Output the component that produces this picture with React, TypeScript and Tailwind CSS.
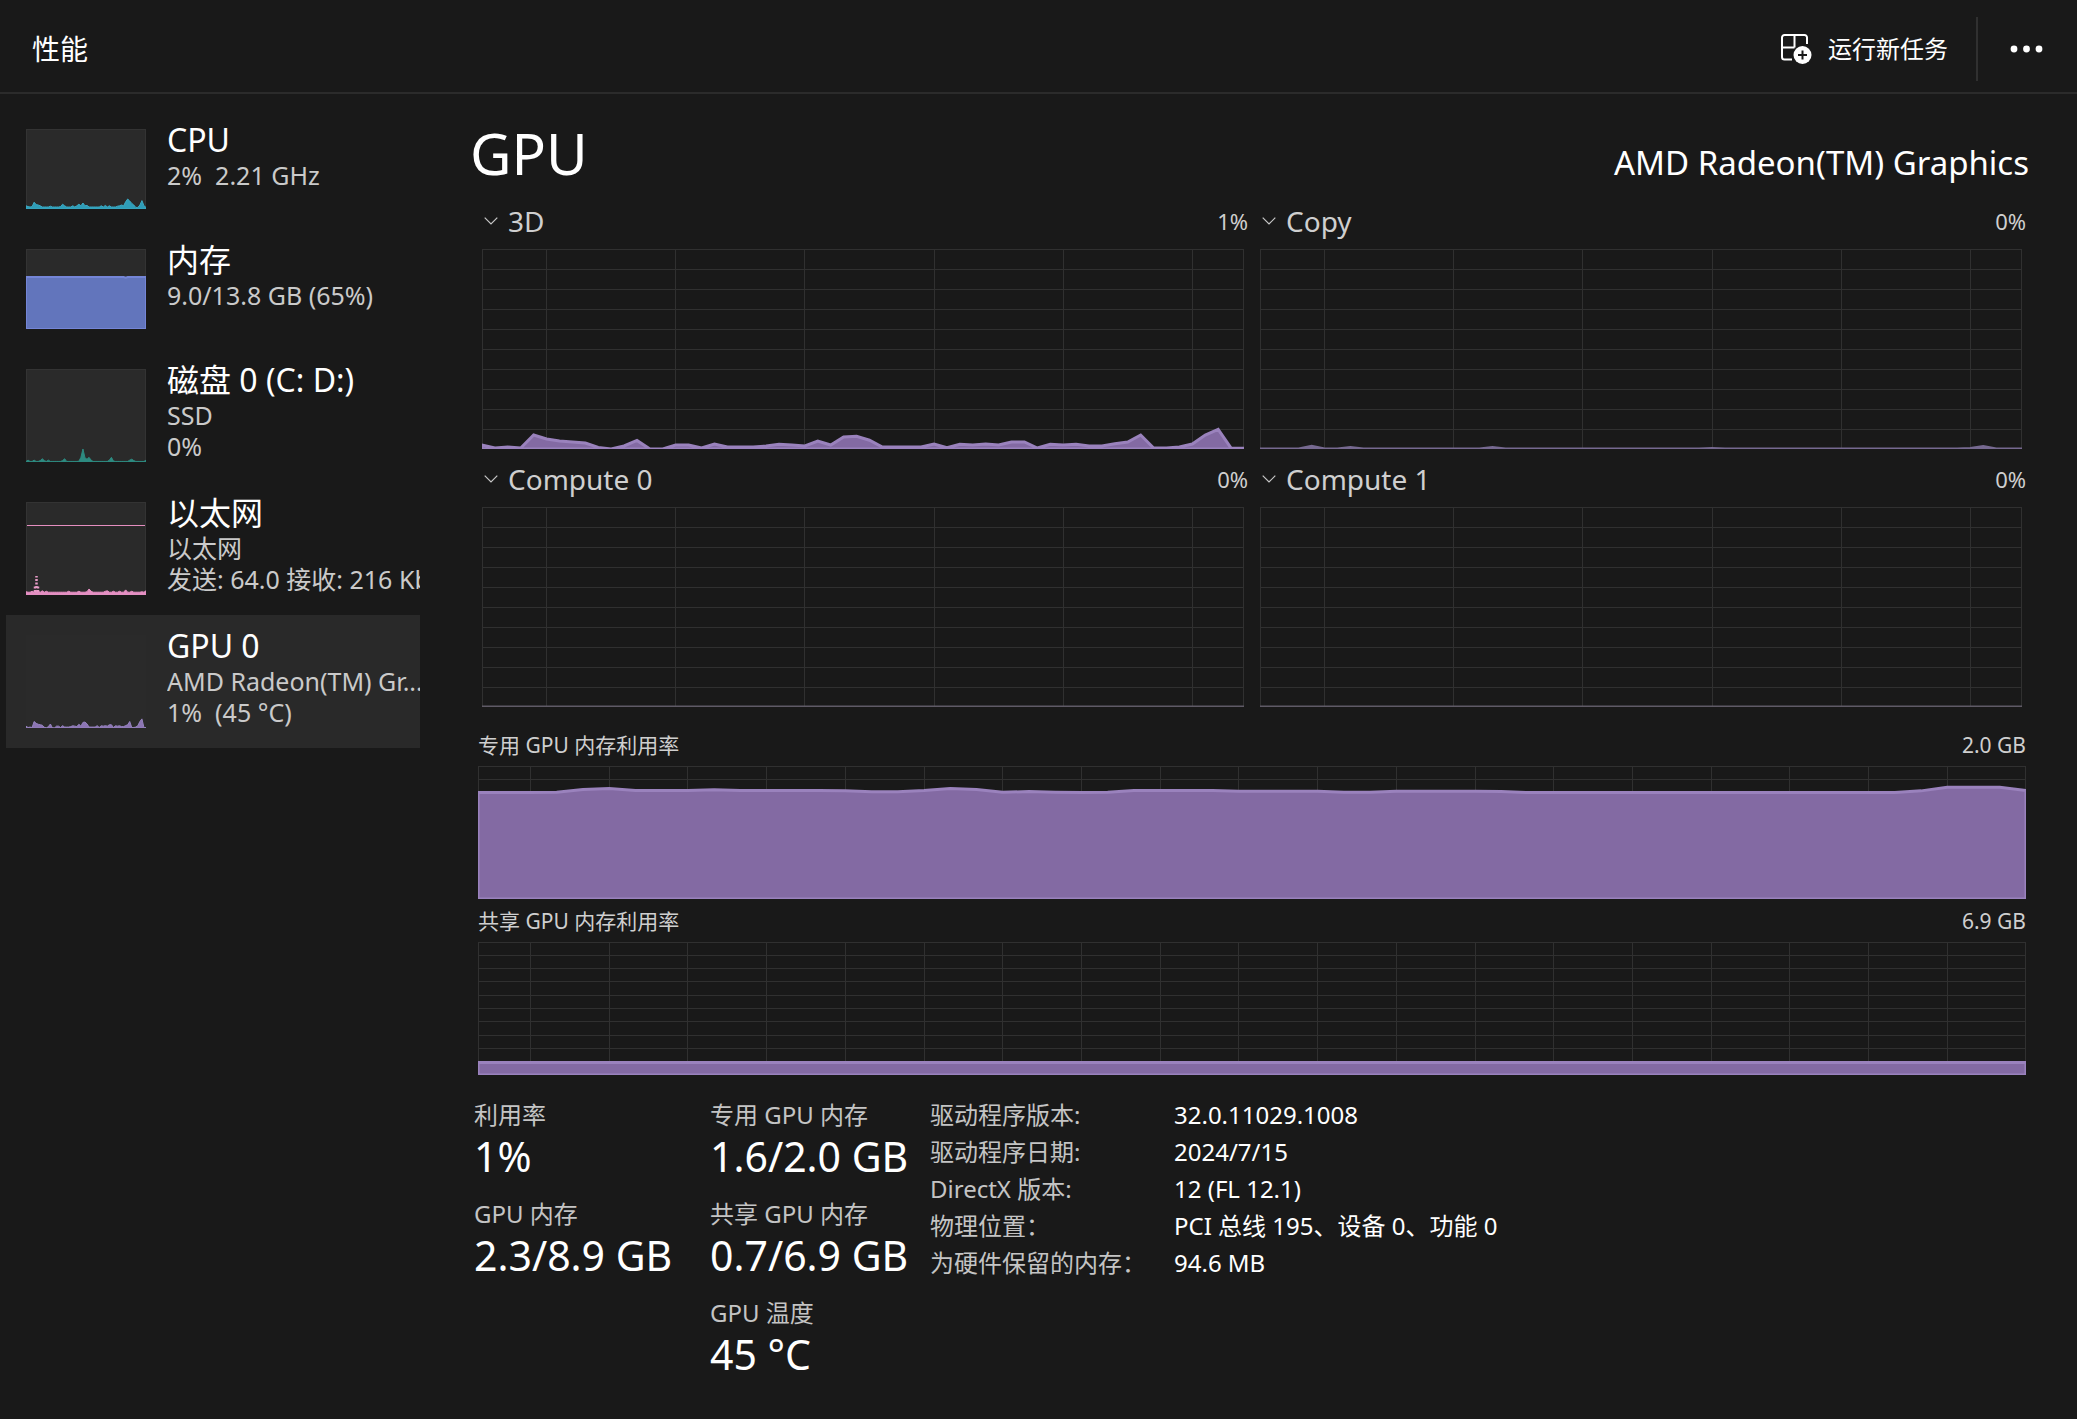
import React from "react";

type Series = number[];

/** Builds a 60-sample series from a resting level and a few peaks. */
function withPeaks(level: number, peaks: Record<number, number>): Series {
  return Array.from({ length: 60 }, (_, i) => peaks[i] ?? level);
}

const engine3d: Series = [
  2, 0.5, 1, 0.5, 7, 5, 4, 3.5, 3, 0.8, 0, 1.5, 4.3, 0, 0, 2, 2, 0.5, 2.5, 1, 1, 1, 1.5, 2.4, 2, 1.5, 4, 2, 6, 6.4,
  4.4, 1, 1, 1, 1, 2.5, 0.6, 2.4, 2, 2.5, 2, 3.5, 3.5, 0.5, 2.4, 2, 2.4, 1.5, 1.5, 2.6, 3.5, 7, 0.5, 0.5, 1, 2.5, 7,
  9.8, 0.4, 0.4,
];
const engineCopy = withPeaks(0, { 4: 1.3, 7: 0.8, 18: 0.8, 35: 0.3, 55: 0.3, 56: 1.3 });
const engineIdle = withPeaks(0, {});
const dedicatedMemory: Series = [
  80, 80, 80, 80.2, 82.3, 83, 81.6, 81.5, 81.5, 82.2, 81.5, 81.5, 81.5, 81.5, 81.3, 80.7, 80.7, 81.5, 83, 82.4, 80.2,
  80.8, 80.2, 80, 80.2, 81.5, 81.6, 81.6, 81.6, 81, 81, 81, 81, 80.3, 80.2, 81, 81, 81, 81, 80.8, ...Array(15).fill(80),
  81.3, 84, 84, 84, 81.5,
];
const sharedMemory = withPeaks(9.4, {});

const cpuLoad = withPeaks(2.5, {
  0: 4, 1: 3, 3: 3, 4: 8.5, 5: 5.5, 6: 5, 7: 4, 12: 3.5, 17: 3, 18: 6, 19: 4, 23: 4, 25: 4, 26: 6, 27: 4, 28: 7.5,
  29: 4, 30: 4.5, 37: 4, 39: 4.5, 41: 4, 45: 3.5, 46: 4, 47: 5, 48: 4, 49: 9, 50: 12.5, 51: 10, 52: 7, 53: 5, 54: 2,
  55: 2, 56: 5, 57: 10.5, 58: 4, 59: 2,
});
const memoryLoad = withPeaks(65, { 49: 64 });
const diskLoad = withPeaks(0.6, {
  1: 2, 4: 2, 7: 1.5, 8: 3.5, 9: 1.5, 11: 2, 18: 1.5, 19: 3.5, 26: 0.8, 27: 5, 28: 14, 29: 4.5, 30: 3, 31: 5, 32: 2,
  41: 2, 42: 5, 43: 1, 51: 2, 52: 3, 53: 1.5, 59: 2,
});
const ethernetLoad = withPeaks(3, {
  0: 3.5, 3: 4, 5: 5, 6: 4, 8: 4.5, 10: 4, 21: 4, 26: 4, 30: 3.5, 31: 6.5, 32: 4, 39: 4, 40: 4.5, 43: 4, 46: 4,
  49: 5.5, 52: 4, 57: 3.5, 59: 4.5,
});

interface AreaProps {
  data: Series;
  fill: string;
  stroke: string;
  strokeWidth?: number;
}

function Area({ data, fill, stroke, strokeWidth = 2 }: AreaProps) {
  const points = data.map((v, i) => `${i},${100 - v}`).join(" L");
  return (
    <svg className="absolute inset-0 h-full w-full" viewBox="0 0 59 100" preserveAspectRatio="none" aria-hidden="true">
      <path
        d={`M0,100 L${points} L59,100 Z`}
        fill={fill}
        stroke={stroke}
        strokeWidth={strokeWidth}
        vectorEffect="non-scaling-stroke"
      />
    </svg>
  );
}

interface GridChartProps {
  label: string;
  data: Series;
  firstLine: number;
  lineEvery: number;
  className: string;
  baseline?: string;
}

/** Chart with ten horizontal bands and vertical lines every few samples. */
function GridChart({ label, data, firstLine, lineEvery, className, baseline = "#9a82bd" }: GridChartProps) {
  const columns: number[] = [];
  for (let s = firstLine; s < 59; s += lineEvery) columns.push((s / 59) * 100);
  const rows = [10, 20, 30, 40, 50, 60, 70, 80, 90];
  return (
    <div
      role="img"
      aria-label={label}
      className={`relative overflow-hidden shadow-[inset_0_0_0_1px_#303030] ${className}`}
    >
      <svg className="absolute inset-0 h-full w-full" shapeRendering="crispEdges" aria-hidden="true">
        {rows.map((y) => (
          <line key={y} x1="0" x2="100%" y1={`${y}%`} y2={`${y}%`} stroke="#303030" />
        ))}
        {columns.map((x) => (
          <line key={x} x1={`${x}%`} x2={`${x}%`} y1="0" y2="100%" stroke="#303030" />
        ))}
      </svg>
      <Area data={data} fill="#836aa3" stroke={baseline} strokeWidth={3} />
    </div>
  );
}

function Chevron() {
  return (
    <svg width="14" height="8" viewBox="0 0 14 8" fill="none" stroke="#c8c8c8" strokeWidth="1.2" aria-hidden="true">
      <path d="M0.7 0.7 7 7 13.3 0.7" />
    </svg>
  );
}

const engines = ["3D", "Copy", "Compute 0", "Compute 1"];

interface EngineProps {
  name: string;
  load: string;
  data: Series;
  baseline?: string;
}

function EngineChart({ name, load, data, baseline }: EngineProps) {
  return (
    <section>
      <div className="-mr-1 flex h-[58px] items-center justify-between pt-0.5">
        <label className="flex items-center gap-2.5 pl-0.5">
          <Chevron />
          <select
            defaultValue={name}
            aria-label={`GPU 引擎: ${name}`}
            className="appearance-none bg-transparent text-[28px] leading-[40px] text-[#cfcfcf] outline-none"
          >
            {engines.map((e) => (
              <option key={e}>{e}</option>
            ))}
          </select>
        </label>
        <span className="text-[22px] text-[#cfcfcf]">{load}</span>
      </div>
      <GridChart
        label={name}
        data={data}
        firstLine={5}
        lineEvery={10}
        className="h-[200px]"
        baseline={baseline}
      />
    </section>
  );
}

function MemoryChart({ name, capacity, data }: { name: string; capacity: string; data: Series }) {
  return (
    <section>
      <div className="flex h-[43px] items-center justify-between pt-0.5 text-[21px] text-[#cfcfcf]">
        <h2>{name}</h2>
        <span>{capacity}</span>
      </div>
      <GridChart label={name} data={data} firstLine={2} lineEvery={3} className="h-[133px]" />
    </section>
  );
}

interface ResourceProps {
  title: string;
  lines: string[];
  selected?: boolean;
  children: React.ReactNode;
}

function Resource({ title, lines, selected, children }: ResourceProps) {
  const tall = lines.length > 1;
  return (
    <button
      type="button"
      aria-current={selected ? "page" : undefined}
      className={`flex w-full items-start gap-[21px] overflow-hidden pl-5 text-left ${
        tall ? "h-[133px]" : "h-[120px]"
      } ${selected ? "bg-[#292929]" : ""}`}
    >
      <span
        className={`relative mt-5 block w-[120px] shrink-0 overflow-hidden bg-[#2a2a2a] ${
          tall ? "h-[93px]" : "h-[80px]"
        } ${selected ? "" : "shadow-[inset_0_0_0_1px_#333333]"}`}
      >
        {children}
      </span>
      <span className="block min-w-0 flex-1 pt-[11px]">
        <span className="block whitespace-nowrap text-[32px] leading-[40px] text-white">{title}</span>
        {lines.map((line) => (
          <span
            key={line}
            className="block overflow-hidden whitespace-pre text-[25px] leading-[31px] text-[#cacaca]"
          >
            {line}
          </span>
        ))}
      </span>
    </button>
  );
}

function Stat({ label, value }: { label: string; value: string }) {
  return (
    <div>
      <dt className="text-[24px] leading-[32px] text-[#c4c4c4]">{label}</dt>
      <dd className="text-[41px] leading-[50px] text-white">{value}</dd>
    </div>
  );
}

const details: [string, string][] = [
  ["驱动程序版本:", "32.0.11029.1008"],
  ["驱动程序日期:", "2024/7/15"],
  ["DirectX 版本:", "12 (FL 12.1)"],
  ["物理位置：", "PCI 总线 195、设备 0、功能 0"],
  ["为硬件保留的内存：", "94.6 MB"],
];

export default function App() {
  return (
    <div
      lang="zh-CN"
      className="flex min-h-screen flex-col bg-[#191919] font-['Noto_Sans','Noto_Sans_CJK_SC',sans-serif] text-white"
    >
      <header className="flex h-[94px] items-center border-b-2 border-[#2b2b2b] pl-8 pt-1.5">
        <h1 className="flex-1 text-[28px] leading-[40px]">性能</h1>
        <button type="button" className="flex items-center gap-4 pr-7 text-[24px]">
          <svg width="31" height="31" viewBox="0 0 31 31" fill="none" aria-hidden="true">
            <path
              d="M11 25.5H3.5a2.5 2.5 0 0 1-2.5-2.5V3.5A2.5 2.5 0 0 1 3.5 1H23.5a2.5 2.5 0 0 1 2.5 2.5V10M13.5 1V13.5M1 13.5H13.5"
              stroke="#fff"
              strokeWidth="2"
            />
            <circle cx="21.5" cy="21" r="9" fill="#fff" />
            <path d="M21.5 16.500v9M17 21h9" stroke="#191919" strokeWidth="2" />
          </svg>
          运行新任务
        </button>
        <span className="h-16 w-0.5 bg-[#303030]" />
        <button type="button" aria-label="更多选项" className="pl-8 pr-[34px]">
          <svg width="33" height="8" viewBox="0 0 33 8" fill="#fff" aria-hidden="true">
            <circle cx="4" cy="4" r="3.4" />
            <circle cx="16.5" cy="4" r="3.4" />
            <circle cx="29" cy="4" r="3.4" />
          </svg>
        </button>
      </header>

      <div className="flex flex-1">
        <nav aria-label="资源" className="ml-1.5 w-[414px] shrink-0 pt-[15px]">
          <Resource title="CPU" lines={["2%  2.21 GHz"]}>
            <Area data={cpuLoad} fill="#2f9db8" stroke="#3aa9c2" strokeWidth={1} />
          </Resource>
          <Resource title="内存" lines={["9.0/13.8 GB (65%)"]}>
            <Area data={memoryLoad} fill="#6275bc" stroke="#7485d6" />
          </Resource>
          <Resource title="磁盘 0 (C: D:)" lines={["SSD", "0%"]}>
            <Area data={diskLoad} fill="#2d8a80" stroke="#2d8a80" strokeWidth={1} />
          </Resource>
          <Resource title="以太网" lines={["以太网", "发送: 64.0 接收: 216 Kbps"]}>
            <Area data={ethernetLoad} fill="#e48fc2" stroke="#e48fc2" strokeWidth={1} />
            <svg className="absolute inset-0 h-full w-full" aria-hidden="true">
              <line x1="1" x2="119" y1="25%" y2="25%" stroke="#e58ec0" shapeRendering="crispEdges" />
              <path
                d="M9 90V83M12 90V83M10.5 86V74"
                stroke="#e79ac6"
                strokeWidth="2.5"
                strokeDasharray="2 1.5"
              />
            </svg>
          </Resource>
          <Resource title="GPU 0" lines={["AMD Radeon(TM) Gr...", "1%  (45 °C)"]} selected>
            <Area data={engine3d} fill="#8c75b3" stroke="#9683bf" strokeWidth={1} />
          </Resource>
        </nav>

        <main className="min-w-0 flex-1 pb-8 pl-[50px] pr-12 pt-[23px]">
          <div className="flex h-[74px] items-baseline justify-between leading-[72px]">
            <h2 className="text-[57px]">GPU</h2>
            <p className="text-[33px]">AMD Radeon(TM) Graphics</p>
          </div>

          <div className="ml-3 mr-[7px] grid grid-cols-2 gap-x-4">
            <EngineChart name="3D" load="1%" data={engine3d} />
            <EngineChart name="Copy" load="0%" data={engineCopy} baseline="#766990" />
            <EngineChart name="Compute 0" load="0%" data={engineIdle} baseline="#5f5a66" />
            <EngineChart name="Compute 1" load="0%" data={engineIdle} baseline="#5f5a66" />
          </div>

          <div className="ml-2 mr-[3px] mt-4">
            <MemoryChart name="专用 GPU 内存利用率" capacity="2.0 GB" data={dedicatedMemory} />
            <MemoryChart name="共享 GPU 内存利用率" capacity="6.9 GB" data={sharedMemory} />
          </div>

          <div className="ml-1 mt-6 flex">
            <dl className="flex w-[236px] flex-col gap-[17px]">
              <Stat label="利用率" value="1%" />
              <Stat label="GPU 内存" value="2.3/8.9 GB" />
            </dl>
            <dl className="flex w-[220px] flex-col gap-[17px]">
              <Stat label="专用 GPU 内存" value="1.6/2.0 GB" />
              <Stat label="共享 GPU 内存" value="0.7/6.9 GB" />
              <Stat label="GPU 温度" value="45 °C" />
            </dl>
            <dl className="-mt-[3px] grid grid-cols-[244px_auto] content-start text-[24px] leading-[37px]">
              {details.map(([term, value]) => (
                <React.Fragment key={term}>
                  <dt className="text-[#c4c4c4]">{term}</dt>
                  <dd className="whitespace-nowrap text-white">{value}</dd>
                </React.Fragment>
              ))}
            </dl>
          </div>
        </main>
      </div>
    </div>
  );
}
